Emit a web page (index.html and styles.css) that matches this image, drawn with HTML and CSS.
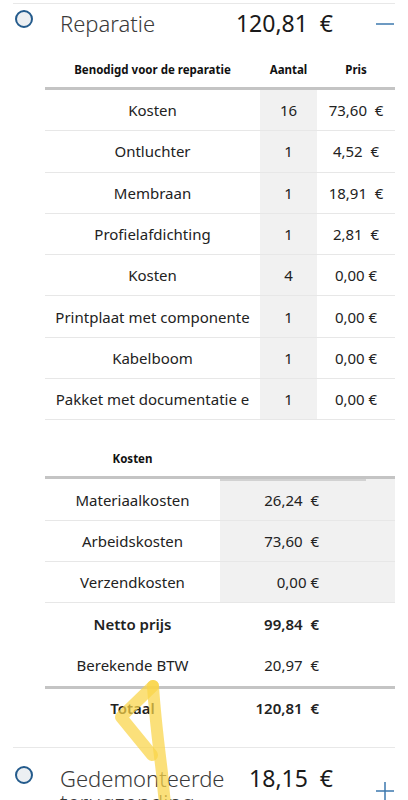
FILE: index.html
```html
<!DOCTYPE html>
<html lang="nl">
<head>
<meta charset="utf-8">
<link rel="stylesheet" href="styles.css">
</head>
<body>
<div class="page">
  <section class="group">
    <div class="group-head">
      <span class="radio"></span>
      <span class="title">Reparatie</span>
      <span class="total">120,81&nbsp;&nbsp;€</span>
      <svg class="toggle" viewBox="0 0 18 18"><path d="M0 9H18" /></svg>
    </div>

    <div class="parts">
      <div class="th">Benodigd voor de reparatie</div>
      <div class="th">Aantal</div>
      <div class="th">Pris</div>
      <div class="bar"></div>

      <div class="td">Kosten</div><div class="td qty">16</div><div class="td">73,60&nbsp;&nbsp;€</div>
      <div class="td">Ontluchter</div><div class="td qty">1</div><div class="td">4,52&nbsp;&nbsp;€</div>
      <div class="td">Membraan</div><div class="td qty">1</div><div class="td">18,91&nbsp;&nbsp;€</div>
      <div class="td">Profielafdichting</div><div class="td qty">1</div><div class="td">2,81&nbsp;&nbsp;€</div>
      <div class="td">Kosten</div><div class="td qty">4</div><div class="td">0,00 €</div>
      <div class="td">Printplaat met componente</div><div class="td qty">1</div><div class="td">0,00 €</div>
      <div class="td">Kabelboom</div><div class="td qty">1</div><div class="td">0,00 €</div>
      <div class="td">Pakket met documentatie e</div><div class="td qty">1</div><div class="td">0,00 €</div>
    </div>

    <div class="costs">
      <div class="th">Kosten</div>
      <div class="th"></div>
      <div class="bar"><span class="bar-mark"></span></div>

      <div class="td">Materiaalkosten</div><div class="td val shade">26,24&nbsp;&nbsp;€</div>
      <div class="td">Arbeidskosten</div><div class="td val shade">73,60&nbsp;&nbsp;€</div>
      <div class="td">Verzendkosten</div><div class="td val shade">0,00 €</div>
      <div class="td plain net strong">Netto prijs</div><div class="td plain net val strong">99,84&nbsp;&nbsp;€</div>
      <div class="td plain vat">Berekende BTW</div><div class="td plain vat val">20,97&nbsp;&nbsp;€</div>
      <div class="bar"></div>
      <div class="td plain sum strong">Totaal</div><div class="td plain sum val strong">120,81&nbsp;&nbsp;€</div>
    </div>
  </section>

  <section class="group next">
    <div class="group-head">
      <span class="radio"></span>
      <span class="title">Gedemonteerde terugzending</span>
      <span class="total">18,15&nbsp;&nbsp;€</span>
      <svg class="toggle plus" viewBox="0 0 18 18"><path d="M0 9H18M9 0V18" /></svg>
    </div>
  </section>

  <svg class="marker" viewBox="0 0 408 800" aria-hidden="true">
    <path d="M153 683 C155 715 159 745 162 770 C163 782 164 792 165 800" />
    <path d="M153 683 L121 714 L152 752" />
  </svg>
</div>
</body>
</html>
```

FILE: styles.css
```css
* { box-sizing: border-box; }
html, body { margin: 0; padding: 0; background: #fff; }
body {
  font-family: "Noto Sans", "Open Sans", sans-serif;
  color: #222;
  width: 408px;
  height: 800px;
  overflow: hidden;
}
.page { position: relative; height: 800px; }

.group { margin: 3px 13px 0; border-top: 1px solid #e8e8e8; }
.group.next { margin-top: 21px; }

.group-head {
  display: flex;
  align-items: flex-start;
  padding-top: 6px;
  height: 40px;
}
.radio {
  width: 18px; height: 18px;
  margin-left: 2px;
  border: 2px solid #245b8c;
  border-radius: 50%;
  background: #eceff2;
  flex: none;
}
.title {
  margin-left: 27px;
  font-size: 22px;
  font-weight: 300;
  color: #3a3a3a;
  line-height: 26px;
  width: 162px;
  flex: none;
}
.total {
  flex: 1;
  text-align: right;
  font-size: 23px;
  line-height: 26px;
  color: #1a1a1a;
  white-space: nowrap;
}
.toggle {
  flex: none;
  width: 18px; height: 18px;
  margin-left: 43px;
  margin-right: 1px;
  margin-top: 5px;
  fill: none;
  stroke: #3c78ae;
  stroke-width: 1.5;
}
.toggle.plus { margin-top: 16px; }

.parts, .costs {
  display: grid;
  margin-left: 32px;
  width: 350px;
  font-size: 15px;
  color: #222;
}
.parts { grid-template-columns: 215px 57px 78px; margin-top: 4px; }
.costs { grid-template-columns: 175px 175px; margin-top: 17px; }

.th {
  height: 39px;
  display: flex; align-items: center; justify-content: center;
  font-size: 11.5px;
  font-weight: 700;
  color: #111;
  padding-top: 4px;
}
.bar {
  grid-column: 1 / -1;
  height: 3px;
  background: #c4c4c4;
  position: relative;
}
.bar-mark {
  position: absolute;
  left: 175px; top: 3px;
  width: 146px; height: 2px;
  background: #d2d2d2;
}
.td {
  height: 41.3px;
  display: flex; align-items: center; justify-content: center;
  border-bottom: 1px solid #e7e7e7;
  white-space: nowrap;
  overflow: hidden;
}
.td.qty { background: #f1f1f1; }
.td.val { justify-content: flex-end; padding-right: 76px; }
.td.shade { background: #f1f1f1; }
.td.plain { border-bottom: none; }
.td.net { height: 41px; }
.td.vat { height: 42px; }
.td.sum { height: 37px; }
.td.strong { font-weight: 600; }

.group.next .group-head { padding-top: 18px; height: auto; }
.group.next .title { line-height: 24px; }
.group.next .total { line-height: 24px; }

.marker {
  position: absolute; left: 0; top: 0;
  width: 408px; height: 800px;
  pointer-events: none;
  fill: none;
  stroke: rgba(250, 212, 70, 0.72);
  stroke-width: 12;
  stroke-linecap: round;
  stroke-linejoin: round;
}
```
